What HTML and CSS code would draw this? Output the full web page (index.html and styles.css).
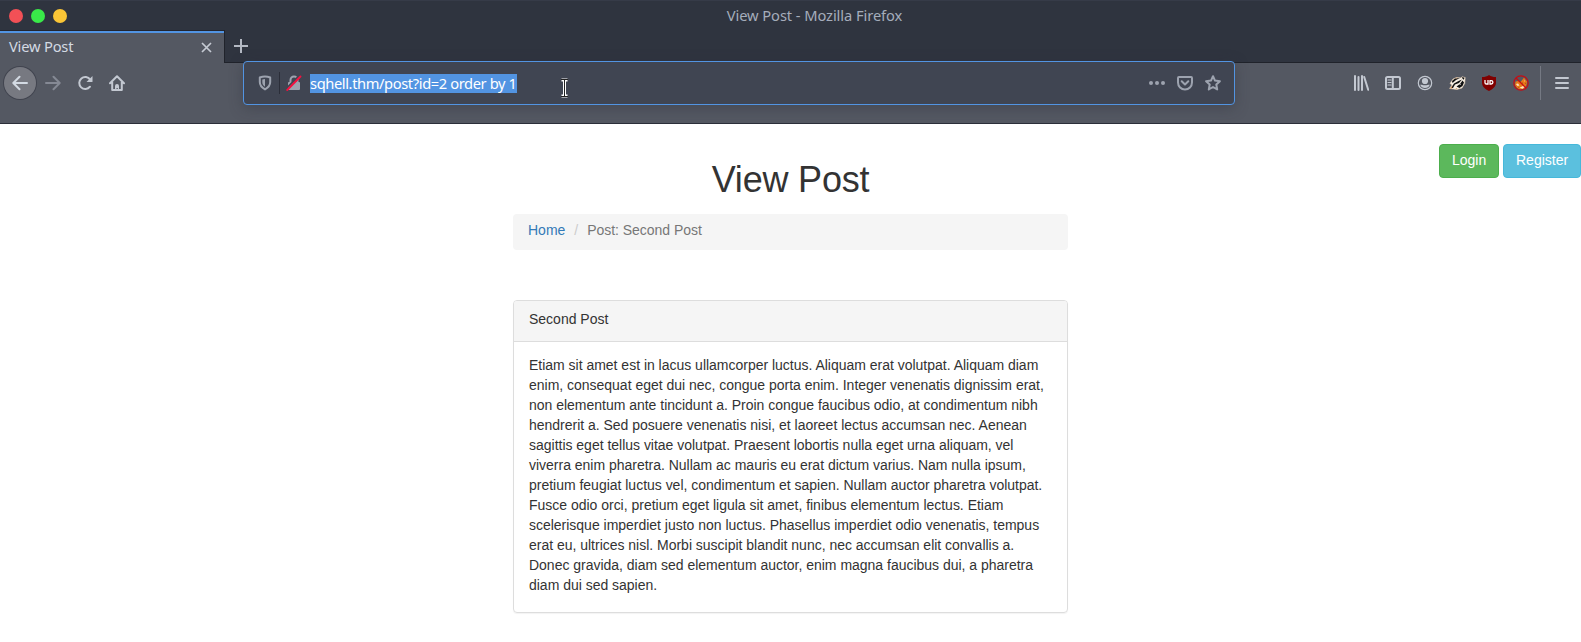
FILE: index.html
```html
<!DOCTYPE html>
<html lang="en">
<head>
<meta charset="utf-8">
<title>View Post</title>
<link rel="stylesheet" href="styles.css">
</head>
<body>
<header class="browser">
  <div class="titlebar">
    <div class="lights"><i class="light red"></i><i class="light green"></i><i class="light amber"></i></div>
    <div class="window-title"><span>View Post - Mozilla Firefox</span></div>
  </div>
  <div class="tabs">
    <div class="tab"><span class="tab-label">View Post</span>
      <svg class="close" width="11" height="11" viewBox="0 0 11 11"><path d="M1 1l9 9M10 1l-9 9"/></svg>
    </div>
    <svg class="plus" width="14" height="14" viewBox="0 0 14 14"><path d="M7 0v14M0 7h14"/></svg>
  </div>
  <div class="toolbar">
    <div class="nav">
      <span class="tool back"><svg width="16" height="16" viewBox="0 0 16 16"><path class="line" d="M15 8H1.500M7.500 1.800L1.300 8l6.200 6.200"/></svg></span>
      <span class="tool dim"><svg width="16" height="16" viewBox="0 0 16 16"><path class="line" d="M1 8h13.500M8.500 1.800L14.700 8l-6.200 6.200"/></svg></span>
      <span class="tool"><svg width="16" height="16" viewBox="0 0 16 16"><path class="line" d="M13.200 4.600A6 6 0 1 0 13 11.700"/><path class="solid" d="M15.500 1v5.400a.6.600 0 0 1-.6.600H9.500z"/></svg></span>
      <span class="tool"><svg width="16" height="16" viewBox="0 0 16 16"><path class="line" d="M1 8.200L8 1.200l7 7M3.200 7v8h9.600V7"/><path class="solid" d="M6 15v-4a2 2 0 0 1 4 0v4H8.800v-2H7.500v2z"/></svg></span>
    </div>
    <div class="urlbar">
      <svg class="shield" width="14" height="16" viewBox="0 0 14 16"><path class="line" d="M7 1.500c2 0 3.700.4 5.200 1v4.600c0 3.200-2 5.600-5.200 7.300C3.800 12.700 1.800 10.300 1.800 7.100V2.500C3.300 1.900 5 1.500 7 1.500z"/><path class="solid" d="M7 4v7.700C5.200 10.500 4.300 9 4.300 7V4.500C5 4.200 6 4 7 4z"/></svg>
      <i class="url-divider"></i>
      <svg class="lock" width="16" height="16" viewBox="0 0 16 16"><path class="line" d="M4.500 8V5a3.500 3.500 0 0 1 7 0v3"/><rect class="solid" x="2" y="7" width="12" height="8" rx="1"/><path class="gap" d="M0 14L13 1"/><path class="strike" d="M1.200 15L14.500 1.500"/></svg>
      <span class="url"><span class="url-text">sqhell.thm/post?id=2 order by 1</span></span>
      <div class="url-actions">
        <svg width="16" height="16" viewBox="0 0 16 16"><circle class="solid" cx="2" cy="8" r="2"/><circle class="solid" cx="8" cy="8" r="2"/><circle class="solid" cx="14" cy="8" r="2"/></svg>
        <svg width="16" height="16" viewBox="0 0 16 16"><path class="line" d="M1.900 2h12.200a.9.900 0 0 1 .9.900V7.500a7 7 0 0 1-14 0V2.900a.9.900 0 0 1 .9-.9z"/><path class="line" d="M4.700 6.300L8 9.500l3.300-3.200"/></svg>
        <svg width="16" height="16" viewBox="0 0 16 16"><path class="line" d="M8 1.200l2 4.400 4.900.6-3.600 3.300.9 4.900L8 12l-4.200 2.400.9-4.900L1.100 6.200 6 5.600z"/></svg>
      </div>
      <svg class="ibeam" width="9" height="20" viewBox="0 0 9 20"><path class="ibeam-edge" d="M1.500 2h6M4.500 2v16M1.500 18h6"/><path class="ibeam-core" d="M1 1.500h7M4.500 1.500v17M1 18.500h7"/></svg>
    </div>
    <div class="extras">
      <span class="tool"><svg width="16" height="16" viewBox="0 0 16 16"><path class="line" d="M2 1v14M5.500 2v13M9 1v14M11.200 2l4 12.800"/></svg></span>
      <span class="tool"><svg width="16" height="16" viewBox="0 0 16 16"><rect class="line" x="1" y="2" width="14" height="12" rx="1.500"/><path class="line" d="M7.800 2v12"/><path class="line thin" d="M3 5h3M3 7.500h3M3 10h3"/></svg></span>
      <span class="tool"><svg width="16" height="16" viewBox="0 0 16 16"><circle class="line thin" cx="8" cy="8" r="6.700"/><circle class="solid" cx="8" cy="6" r="3.100"/><path class="solid" d="M3.200 9.800c1.300-.5 2 .5 4.800.5s3.500-1 4.800-.5a5.200 5.200 0 0 1-9.600 0z"/></svg></span>
      <span class="tool"><svg width="17" height="16" viewBox="0 0 17 16"><path fill="#f7efe4" stroke="#e7d0b4" stroke-width=".6" d="M.6 13.500L3 10 1 8.500 4 4l3.500-1.500L12 3l1-1.200 3.200.7-.5 6L13 13l-5 1.500z"/><path fill="#111" d="M3 6l3-2.500 5-.5-4 2-3.500 3zM2 13l3-4.500L9.500 6l3.500-1.500L10 8l-4 1.500L4 13zM7.500 11.500L11 9l2.500-3.500 1.500 2-1.500 3.500-3 2zM13 2l2.500.8-.7 2-1.300-1z"/><path fill="#fff" d="M10.500 9.500l1-.7.300.8-.8.500z"/><path fill="#c8844a" d="M1 13.200l2.200-2.500-.2 2.800zM6 3.200l2.500-.8-1 1zM6.500 13l2 .3-1 .8z"/></svg></span>
      <span class="tool"><svg width="16" height="16" viewBox="0 0 16 16"><path fill="#800000" d="M8 0c2 1.500 4 2 7 2v5.500c0 4-3 6.500-7 8.500-4-2-7-4.500-7-8.500V2c3 0 5-.5 7-2z"/><path fill="none" stroke="#fff" stroke-width="1.300" d="M4 5v2.700c0 .8.500 1.300 1.500 1.300H7V5M9 5.600v3.400h1.200a1.700 1.700 0 0 0 0-3.400H8.500"/></svg></span>
      <span class="tool"><svg width="16" height="16" viewBox="0 0 16 16"><path fill="#e87918" d="M2.500 6.500L5 6l2.500 1L10 4l1-1.500 1.500 2.200L14 6.500 13.500 10l-2 3.500L7 14.500 4 13l-2-3z"/><path fill="#fbe5bf" d="M3 9l2-.5 1.500 2L4.500 11zM6.500 12.800L10 11l2 .5-2.500 2.300zM11 5.500l1.200.2-.6 1z"/><path fill="#7b3c0c" d="M8.500 8l1.300-.5v1.300zM12 7.700l1 .3-.7 1zM5.500 12l1 .8-1 .2z"/><circle cx="8" cy="8" r="7.200" fill="none" stroke="#c90c13" stroke-width="1.200"/><path fill="none" stroke="#c90c13" stroke-width="1.200" d="M3 3l10 10"/></svg></span>
      <i class="divider"></i>
      <span class="tool"><svg width="14" height="14" viewBox="0 0 14 14"><path class="line" d="M1 2h12M1 7h12M1 12h12"/></svg></span>
    </div>
  </div>
</header>
<main class="page">
  <div class="account"><a class="btn login">Login</a><a class="btn register">Register</a></div>
  <div class="column">
    <h1>View Post</h1>
    <nav class="breadcrumb"><a>Home</a><span class="sep">/</span><span class="active">Post: Second Post</span></nav>
    <article class="panel">
      <div class="panel-heading">Second Post</div>
      <p class="panel-body">Etiam sit amet est in lacus ullamcorper luctus. Aliquam erat volutpat. Aliquam diam<br>enim, consequat eget dui nec, congue porta enim. Integer venenatis dignissim erat,<br>non elementum ante tincidunt a. Proin congue faucibus odio, at condimentum nibh<br>hendrerit a. Sed posuere venenatis nisi, et laoreet lectus accumsan nec. Aenean<br>sagittis eget tellus vitae volutpat. Praesent lobortis nulla eget urna aliquam, vel<br>viverra enim pharetra. Nullam ac mauris eu erat dictum varius. Nam nulla ipsum,<br>pretium feugiat luctus vel, condimentum et sapien. Nullam auctor pharetra volutpat.<br>Fusce odio orci, pretium eget ligula sit amet, finibus elementum lectus. Etiam<br>scelerisque imperdiet justo non luctus. Phasellus imperdiet odio venenatis, tempus<br>erat eu, ultrices nisl. Morbi suscipit blandit nunc, nec accumsan elit convallis a.<br>Donec gravida, diam sed elementum auctor, enim magna faucibus dui, a pharetra<br>diam dui sed sapien.</p>
    </article>
  </div>
</main>
</body>
</html>
```
FILE: styles.css
```css
* { box-sizing: border-box; }
body { margin: 0; height: 642px; overflow: hidden; background: #fff; color: #333; font: 14px/20px "Liberation Sans", Arial, sans-serif; }
svg { display: block; flex: none; }
.browser { height: 124px; background: #545862; border-bottom: 1px solid #2b2e39; font-family: "Noto Sans", sans-serif; color: #d3dae3; }
.titlebar { height: 30px; background: #2f343f; border-top: 1px solid #363b48; display: grid; grid-template-columns: 1fr auto 1fr; align-items: center; }
.lights { display: flex; gap: 8px; padding-left: 9px; }
.light { width: 14px; height: 14px; border-radius: 50%; }
.red { background: #f25056; }
.green { background: #39ea49; }
.amber { background: #fac536; }
.window-title { padding: 0 0 2px 48px; margin-right: -48px; transform: translateX(-24px); font-size: 14.700px; letter-spacing: -.08px; color: #a5adbb; white-space: nowrap; }
.tabs { height: 33px; background: #2f343f; border-bottom: 1px solid #20232b; display: flex; align-items: flex-start; }
.tab { width: 225px; height: 33px; background: #545862; border-top: 1px solid #23252e; border-right: 1px solid #20232b; box-shadow: inset 0 2px #5294e2; display: flex; align-items: center; justify-content: space-between; padding: 1px 12px 0 9px; }
.tab-label { padding-bottom: 4px; font-size: 14.700px; letter-spacing: -.2px; }
.close { stroke: #c5cad3; stroke-width: 1.700; }
.plus { margin: 9px 0 0 9px; stroke: #b3b8c2; stroke-width: 2; }
.toolbar { height: 40px; display: flex; align-items: center; }
.nav { width: 243px; display: flex; padding-left: 4px; }
.tool { width: 32px; height: 32px; display: flex; align-items: center; justify-content: center; color: #c3c8d1; }
.back { margin-right: 1px; border-radius: 50%; background: #777981; box-shadow: 0 0 0 1px #41444f; color: #d3dae3; }
.dim { color: #858994; }
.line { fill: none; stroke: currentColor; stroke-width: 2; stroke-linejoin: round; stroke-linecap: round; }
.thin { stroke-width: 1.200; }
.solid { fill: currentColor; }
.urlbar { position: relative; width: 992px; height: 44px; flex: none; display: flex; align-items: center; padding: 0 13px 0 14px; background: #404552; border: 1px solid #5294e2; border-radius: 4px; box-shadow: 0 3px 14px rgba(45,48,60,.4); color: #9da3af; }
.url-divider { width: 1px; height: 22px; margin: 0 6px 0 7px; background: #2b2e39; }
.lock .gap { stroke: #404552; stroke-width: 2; }
.lock .strike { stroke: #f5103f; stroke-width: 1.800; stroke-linecap: round; }
.url { margin-left: 8px; flex: 1; display: flex; }
.url-text { height: 19px; line-height: 19px; background: #5294e2; color: #fff; font-size: 14.700px; letter-spacing: -.4px; white-space: nowrap; }
.url-actions { display: flex; gap: 12px; }
.ibeam { position: absolute; left: 316px; top: 16px; }
.ibeam-edge { fill: none; stroke: #fff; stroke-width: 3; }
.ibeam-core { fill: none; stroke: #222; stroke-width: 1; }
.extras { margin-left: auto; display: flex; align-items: center; padding-right: 3px; }
.divider { width: 1px; height: 34px; margin: 0 5px 0 3px; background: #757983; }
.page { display: grid; grid-template-columns: 1fr 555px 1fr; }
.account { grid-column: 3; grid-row: 1; display: flex; justify-content: flex-end; align-items: flex-start; gap: 4px; padding-top: 20px; }
.btn { height: 34px; padding: 5px 12px; border: 1px solid; border-radius: 4px; color: #fff; }
.login { width: 60px; background: #5cb85c; border-color: #4cae4c; }
.register { width: 78px; background: #5bc0de; border-color: #46b8da; }
.column { grid-column: 2; grid-row: 1; }
h1 { margin: 36px 0 0; height: 54px; font-size: 36px; line-height: 40px; letter-spacing: -.2px; font-weight: 500; text-align: center; }
.breadcrumb { height: 36px; padding: 6px 15px; border-radius: 4px; background: #f5f5f5; display: flex; }
.breadcrumb a { color: #337ab7; }
.sep { color: #ccc; padding: 0 9px; }
.active { color: #777; letter-spacing: -.04px; }
.panel { margin-top: 50px; height: 313px; border: 1px solid #ddd; border-radius: 4px; box-shadow: 0 1px 1px rgba(0,0,0,.05); }
.panel-heading { height: 41px; padding: 8px 15px; background: #f5f5f5; border-bottom: 1px solid #ddd; border-radius: 3px 3px 0 0; }
.panel-body { margin: 0; padding: 13px 15px; white-space: nowrap; letter-spacing: -.014px; }
```
